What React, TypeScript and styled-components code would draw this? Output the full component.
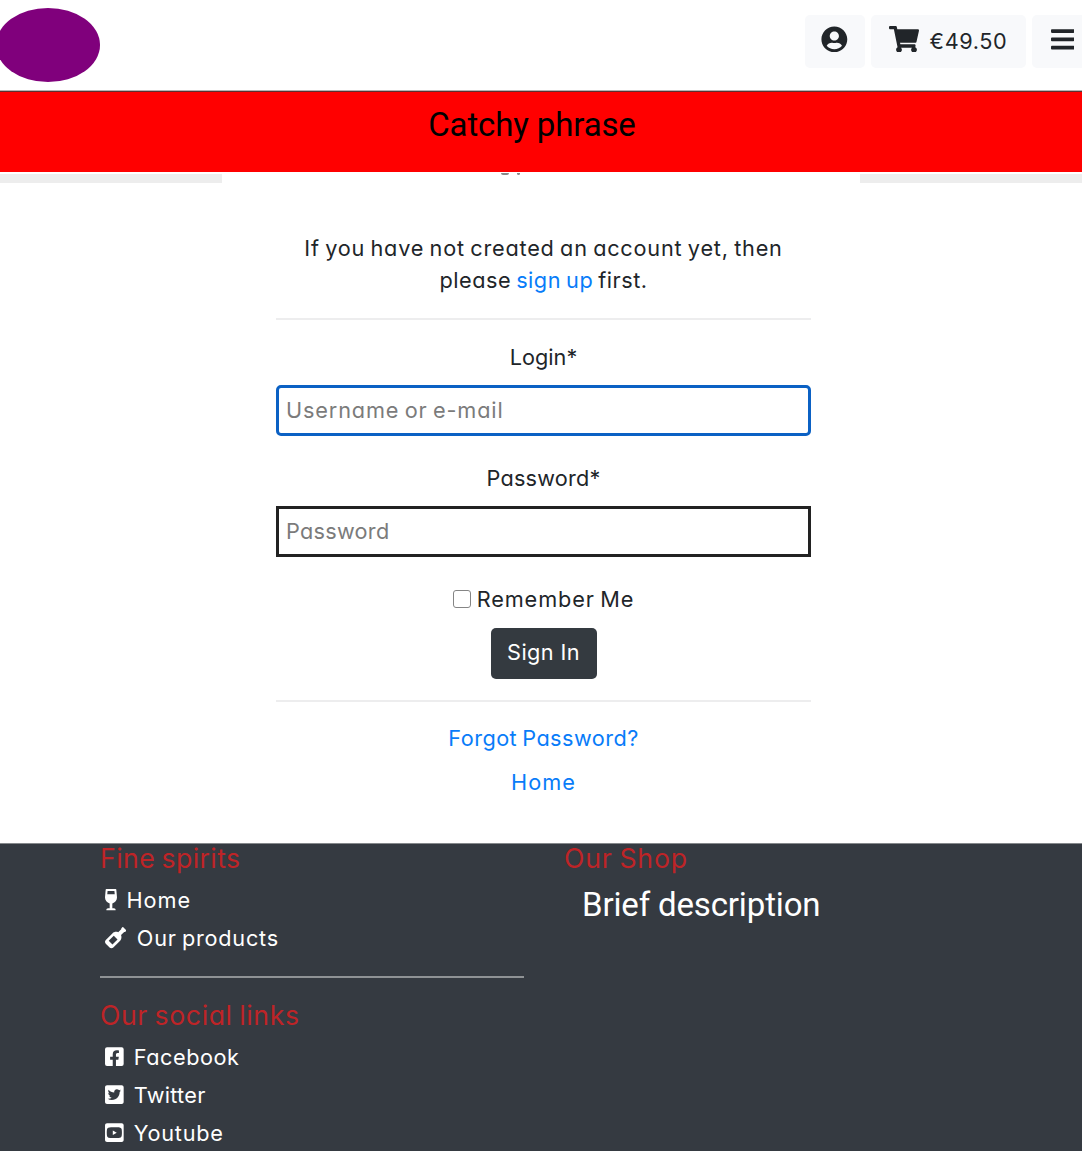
import React from 'react';
import styled, { createGlobalStyle } from 'styled-components';
import {
  FaBars,
  FaFacebookSquare,
  FaShoppingCart,
  FaTwitterSquare,
  FaUserCircle,
  FaWineBottle,
  FaWineGlassAlt,
  FaYoutubeSquare,
} from 'react-icons/fa';

const GlobalStyle = createGlobalStyle`
  *, *::before, *::after { box-sizing: border-box; }
  body {
    margin: 0;
    background: #fff;
    color: #212529;
    font-family: Inter, "Open Sans", sans-serif;
    font-feature-settings: "cv11";
    font-size: 21.7px;
    font-weight: 430;
    line-height: 32px;
    word-spacing: -1.5px;
  }
`;

const Page = styled.div`
  height: 1151px;
  overflow: hidden;
  display: flex;
  flex-direction: column;
`;

const Text = styled.span<{ $track: number }>`
  letter-spacing: ${(p) => p.$track}px;
  white-space: nowrap;
`;

const Header = styled.header`
  flex: none;
  height: 90px;
  display: flex;
  justify-content: space-between;
  align-items: flex-start;
`;

const Logo = styled.div`
  width: 104px;
  height: 74px;
  margin: 8px 0 0 -4px;
  border-radius: 50%;
  background: #80007c;
`;

const Toolbar = styled.nav`
  display: flex;
  gap: 6px;
  margin: 15px -12px 0 0;
`;

const ToolButton = styled.button<{ $width: number; $icon: number }>`
  width: ${(p) => p.$width}px;
  height: 53px;
  padding: 0 1px 5px 0;
  display: flex;
  align-items: center;
  justify-content: center;
  gap: 11px;
  border: 0;
  border-radius: 5px;
  background: #f8f9fb;
  color: #212529;
  font: inherit;
  font-feature-settings: inherit;

  svg { flex: none; width: ${(p) => p.$icon}px; height: 26.7px; }
`;

const Price = styled(Text)`
  padding-top: 3px;
`;

const Banner = styled.div`
  flex: none;
  height: 82px;
  padding: 18px 18px 0 0;
  border-top: 1px solid #b5b5b5;
  box-shadow: inset 0 1px 0 #603030;
  background: #f00;
  color: #000;
  text-align: center;
  font-family: Roboto, sans-serif;
  font-size: 33px;
  font-weight: 400;
  word-spacing: 0;
`;

const Main = styled.main`
  flex: none;
  height: 672px;
  display: flex;
  flex-direction: column;
  align-items: center;
  border-bottom: 1px solid #85888b;
`;

const CardEdge = styled.div`
  width: 100%;
  height: 11px;
  flex: none;
  display: flex;
  justify-content: center;
  padding: 2px 0 0;
  background: linear-gradient(#fff 2px, #ededed 2px);
`;

const CardTop = styled.div`
  width: 638px;
  height: 11px;
  margin-top: -2px;
  padding-left: 279px;
  display: flex;
  gap: 8px;
  background: #fff;
`;

const Descender = styled.i<{ $width: number }>`
  width: ${(p) => p.$width}px;
  height: 2px;
  margin-top: 1px;
  border-radius: 0 0 4px 4px;
  background: #888;
`;

const Form = styled.form`
  width: 535px;
  margin: 49px 0 0 5px;
  display: flex;
  flex-direction: column;
  align-items: center;
`;

const Intro = styled.p`
  margin: 0;
  display: flex;
  flex-direction: column;
  align-items: center;
`;

const Link = styled.a`
  color: #087cf9;
  text-decoration: none;
`;

const Divider = styled.hr<{ $before: number; $after: number }>`
  width: 100%;
  height: 2px;
  margin: ${(p) => p.$before}px 0 ${(p) => p.$after}px;
  border: 0;
  background: #ededee;
`;

const Label = styled.label`
  height: 44px;
`;

const Input = styled.input<{ $active?: boolean; $track: number }>`
  width: 100%;
  height: 51px;
  padding: 0 7px 2px;
  margin-bottom: 26px;
  border: 3px solid ${(p) => (p.$active ? '#0b61c4' : '#222')};
  border-radius: ${(p) => (p.$active ? 5 : 0)}px;
  outline: 0;
  background: #fff;
  font: inherit;
  font-feature-settings: inherit;
  letter-spacing: ${(p) => p.$track}px;
  word-spacing: -1.5px;

  &::placeholder { color: #7b7b7b; opacity: 1; }
`;

const Remember = styled.label`
  display: flex;
  align-items: center;
  gap: 6px;
`;

const Checkbox = styled.input`
  appearance: none;
  width: 18px;
  height: 18px;
  margin: 0 0 1px;
  border: 1px solid #858585;
  border-radius: 3px;
  background: #fff;
`;

const Submit = styled.button`
  width: 106px;
  height: 51px;
  margin-top: 13px;
  padding: 0 0 3px;
  border: 0;
  border-radius: 5px;
  background: #343a40;
  color: #fff;
  font: inherit;
  font-feature-settings: inherit;
`;

const FormLinks = styled.div`
  display: flex;
  flex-direction: column;
  align-items: center;
  gap: 12px;
`;

const Footer = styled.footer`
  flex: 1;
  padding: 0 0 0 100px;
  display: grid;
  grid-template-columns: 424px 1fr;
  column-gap: 40px;
  align-content: start;
  background: #353a41;
  color: #fff;
`;

const Heading = styled.h2`
  height: 28px;
  margin: 0 0 9px;
  font-size: 26.7px;
  font-weight: 420;
  line-height: 28px;
  color: #be2427;
`;

const Section = styled.section<{ $ruled?: boolean }>`
  height: ${(p) => (p.$ruled ? 134 : 150)}px;
  margin-bottom: ${(p) => (p.$ruled ? 23 : 0)}px;
  border-bottom: ${(p) => (p.$ruled ? '2px solid #8f9295' : '0')};
`;

const FooterLink = styled.a<{ $gap: number; $icon: number }>`
  height: 38px;
  padding-left: 5px;
  display: flex;
  align-items: center;
  gap: ${(p) => p.$gap}px;
  color: inherit;

  svg { flex: none; width: ${(p) => p.$icon}px; height: 21.3px; }
`;

const Description = styled.p`
  margin: 15px 0 0 18px;
  font-family: Roboto, sans-serif;
  font-size: 33px;
  font-weight: 400;
  line-height: 36px;
  word-spacing: 0;
`;

export default function App() {
  return (
    <Page>
      <GlobalStyle />
      <Header>
        <Logo />
        <Toolbar>
          <ToolButton $width={60} $icon={26.7} aria-label="Account"><FaUserCircle /></ToolButton>
          <ToolButton $width={155} $icon={30}>
            <FaShoppingCart />
            <Price $track={0.6}>€49.50</Price>
          </ToolButton>
          <ToolButton $width={62} $icon={23.4} aria-label="Menu"><FaBars /></ToolButton>
        </Toolbar>
      </Header>
      <Banner><Text $track={-0.13}>Catchy phrase</Text></Banner>
      <Main>
        <CardEdge>
          <CardTop>
            <Descender $width={8} />
            <Descender $width={3} />
          </CardTop>
        </CardEdge>
        <Form>
          <Intro>
            <Text $track={0.79}>If you have not created an account yet, then</Text>
            <Text $track={0.5}>please <Link>sign up</Link> first.</Text>
          </Intro>
          <Divider $before={22} $after={21} />
          <Label><Text $track={0}>Login*</Text></Label>
          <Input $active $track={0.85} placeholder="Username or e-mail" />
          <Label><Text $track={0.2}>Password*</Text></Label>
          <Input $track={0.26} type="text" placeholder="Password" />
          <Remember>
            <Checkbox type="checkbox" />
            <Text $track={0.9}>Remember Me</Text>
          </Remember>
          <Submit type="button"><Text $track={0.4}>Sign In</Text></Submit>
          <Divider $before={21} $after={20} />
          <FormLinks>
            <Link><Text $track={0.45}>Forgot Password?</Text></Link>
            <Link><Text $track={1}>Home</Text></Link>
          </FormLinks>
        </Form>
      </Main>
      <Footer>
        <div>
          <Section $ruled>
            <Heading><Text $track={0.38}>Fine spirits</Text></Heading>
            <FooterLink $gap={9.5} $icon={12}><FaWineGlassAlt /><Text $track={1}>Home</Text></FooterLink>
            <FooterLink $gap={10.5} $icon={21.3}><FaWineBottle /><Text $track={0.75}>Our products</Text></FooterLink>
          </Section>
          <Section>
            <Heading><Text $track={0.58}>Our social links</Text></Heading>
            <FooterLink $gap={10} $icon={18.7}><FaFacebookSquare /><Text $track={0.55}>Facebook</Text></FooterLink>
            <FooterLink $gap={10} $icon={18.7}><FaTwitterSquare /><Text $track={0.3}>Twitter</Text></FooterLink>
            <FooterLink $gap={10} $icon={18.7}><FaYoutubeSquare /><Text $track={0.75}>Youtube</Text></FooterLink>
          </Section>
        </div>
        <div>
          <Heading><Text $track={0.8}>Our Shop</Text></Heading>
          <Description><Text $track={-0.15}>Brief description</Text></Description>
        </div>
      </Footer>
    </Page>
  );
}
